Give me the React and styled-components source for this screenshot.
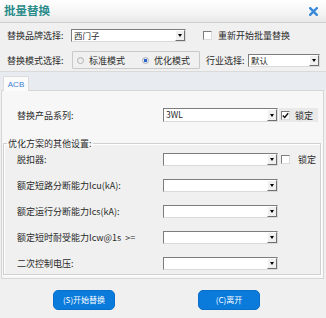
import React from "react";
import styled, { createGlobalStyle } from "styled-components";

const Global = createGlobalStyle`
  html, body { margin: 0; padding: 0; background: #f0f0f0; }
  body { font-family: "Noto Sans CJK SC", "Liberation Sans", sans-serif; font-size: 9px; color: #2a2a2a; }
  * { box-sizing: border-box; }
`;

const Window = styled.div`
  width: 326px;
  height: 318px;
  display: flex;
  flex-direction: column;
  background: #f0f0f0;
  overflow: hidden;
`;

const TitleBar = styled.div`
  height: 23px;
  flex: none;
  display: flex;
  align-items: center;
  justify-content: space-between;
  padding: 0 8px 0 4px;
  background: linear-gradient(#ffffff, #f4f4f4 60%, #e8e8e8);
  border-bottom: 1px solid #cfcfcf;
`;

const Title = styled.span`
  font-size: 11.5px;
  font-weight: 700;
  color: #2b8c8c;
  line-height: 1;
`;

const Close = styled.svg`
  width: 9px;
  height: 9px;
  display: block;
`;

const TopForm = styled.div`
  flex: none;
  display: flex;
  flex-direction: column;
  gap: 9px;
  padding: 6px 0 2px 7px;
`;

const Row = styled.div`
  display: flex;
  align-items: center;
  height: ${(p) => p.$h || 13}px;
`;

const Label = styled.span`
  width: ${(p) => p.$w}px;
  flex: none;
  white-space: pre;
  line-height: 1;
  margin-left: ${(p) => p.$ml || 0}px;
`;

const SelectBox = styled.div`
  width: ${(p) => p.$w}px;
  height: ${(p) => p.$h || 13}px;
  flex: none;
  display: flex;
  align-items: stretch;
  background: #fff;
  border: 1px solid;
  border-color: #7d7d7d #dadada #dadada #7d7d7d;
`;

const SelectValue = styled.span`
  flex: 1;
  padding-left: 2px;
  line-height: 11px;
  font-size: 8.5px;
  white-space: nowrap;
  overflow: hidden;
`;

const DropBtn = styled.span`
  width: 10px;
  flex: none;
  display: flex;
  align-items: center;
  justify-content: center;
  background: #f0f0f0;
  border: 1px solid;
  border-color: #ffffff #6f6f6f #6f6f6f #ffffff;
  &::after {
    content: "";
    border-left: 2.5px solid transparent;
    border-right: 2.5px solid transparent;
    border-top: 3px solid #000;
  }
`;

const CheckWrap = styled.label`
  display: flex;
  align-items: center;
  gap: ${(p) => p.$gap || 6}px;
  margin-left: ${(p) => p.$ml || 0}px;
  height: 14px;
  padding: 0 ${(p) => (p.$bg ? 5 : 0)}px 0 ${(p) => (p.$bg ? 2 : 0)}px;
  background: ${(p) => (p.$bg ? "#e9e9e9" : "transparent")};
  white-space: nowrap;
  line-height: 1;
`;

const Box = styled.span`
  width: 9px;
  height: 9px;
  flex: none;
  background: #fff;
  border: 1px solid;
  border-color: #7d7d7d #dcdcdc #dcdcdc #7d7d7d;
  display: flex;
  align-items: center;
  justify-content: center;
`;

const RadioGroup = styled.div`
  width: 128px;
  height: 18px;
  flex: none;
  display: flex;
  align-items: center;
  gap: 17px;
  padding-left: 4px;
  border: 1px solid #c9c9c9;
  border-radius: 1px;
`;

const RadioItem = styled.span`
  display: flex;
  align-items: center;
  gap: 5px;
  white-space: nowrap;
  line-height: 1;
`;

const RadioDot = styled.span`
  width: 7px;
  height: 7px;
  border-radius: 50%;
  flex: none;
  border: 1px solid #b0b0b0;
  background: ${(p) =>
    p.$on
      ? "radial-gradient(circle, #2c63c8 0 1.6px, #dfe9f7 2px)"
      : "linear-gradient(#e4e4e4, #fafafa)"};
`;

const Tabs = styled.div`
  flex: none;
  display: flex;
  flex-direction: column;
`;

const TabStrip = styled.div`
  height: 19px;
  display: flex;
  align-items: flex-end;
  padding-left: 3px;
  background: #e8ebef;
  border-top: 1px solid #dadada;
`;

const Tab = styled.span`
  width: 26px;
  height: 15px;
  display: flex;
  align-items: center;
  justify-content: center;
  background: #fbfbfb;
  border: 1px solid #dcdcdc;
  border-bottom: none;
  font-family: "Liberation Sans", sans-serif;
  font-size: 8px;
  color: #3b7fd2;
  margin-bottom: -1px;
  position: relative;
`;

const Panel = styled.div`
  height: 189px;
  margin: 0 2px 0 1px;
  display: flex;
  flex-direction: column;
  padding: 17px 0 0 1px;
  background: #f7f7f7;
  border: 1px solid #d6d6d6;
`;

const PanelRow = styled(Row)`
  height: 14px;
  padding-left: 14px;
`;

const Group = styled.fieldset`
  margin: 17px 2px 0 0;
  padding: 5px 0 4px 13px;
  border: 1px solid #d0d0d0;
  box-shadow: inset 1px 1px 0 #fff, 1px 1px 0 #fff;
  background: #f0f0f0;
  display: flex;
  flex-direction: column;
  gap: 13px;
  min-width: 0;
`;

const Legend = styled.legend`
  padding: 0 1px;
  margin-left: -10px;
  line-height: 9px;
  white-space: nowrap;
  background: #f7f7f7;
`;

const Footer = styled.div`
  flex: 1;
  display: flex;
  align-items: flex-start;
  gap: 83px;
  padding: 11px 0 0 53px;
`;

const Button = styled.button`
  width: 62px;
  height: 20px;
  border: 1px solid #0a6fca;
  border-radius: 5px;
  background: #0b7bdb;
  color: #fff;
  font-family: "Noto Sans CJK SC", sans-serif;
  font-size: 8px;
  padding: 0;
  line-height: 1;
`;

const Check = ({ on }) => (
  <Box>
    {on && (
      <svg width="7" height="7" viewBox="0 0 7 7">
        <path d="M0.8 3.4 L2.7 5.4 L6.2 1.2" fill="none" stroke="#111" strokeWidth="1.4" />
      </svg>
    )}
  </Box>
);

const Select = ({ w, value, h }) => (
  <SelectBox $w={w} $h={h}>
    <SelectValue>{value}</SelectValue>
    <DropBtn />
  </SelectBox>
);

const groupRows = [
  { label: "脱扣器:", lock: true },
  { label: "额定短路分断能力Icu(kA):" },
  { label: "额定运行分断能力Ics(kA):" },
  { label: "额定短时耐受能力Icw@1s  >=" },
  { label: "二次控制电压:" },
];

export default function App() {
  return (
    <>
      <Global />
      <Window>
        <TitleBar>
          <Title>批量替换</Title>
          <Close viewBox="0 0 9 9">
            <path d="M1.2 1.2 L7.8 7.8 M7.8 1.2 L1.2 7.8" stroke="#3a8ad8" strokeWidth="2.4" strokeLinecap="square" />
          </Close>
        </TitleBar>
        <TopForm>
          <Row>
            <Label $w={64}>替换品牌选择:</Label>
            <Select w={115} value="西门子" />
            <CheckWrap $ml={17}>
              <Check />
              重新开始批量替换
            </CheckWrap>
          </Row>
          <Row $h={18}>
            <Label $w={65}>替换模式选择:</Label>
            <RadioGroup>
              <RadioItem>
                <RadioDot />
                标准模式
              </RadioItem>
              <RadioItem>
                <RadioDot $on />
                优化模式
              </RadioItem>
            </RadioGroup>
            <Label $w={42} $ml={6}>行业选择:</Label>
            <Select w={72} value="默认" />
          </Row>
        </TopForm>
        <Tabs>
          <TabStrip>
            <Tab>ACB</Tab>
          </TabStrip>
          <Panel>
            <PanelRow>
              <Label $w={146}>替换产品系列:</Label>
              <Select w={115} h={14} value="3WL" />
              <CheckWrap $bg $gap={5} $ml={1}>
                <Check on />
                锁定
              </CheckWrap>
            </PanelRow>
            <Group>
              <Legend>优化方案的其他设置:</Legend>
              {groupRows.map((r) => (
                <Row key={r.label}>
                  <Label $w={146}>{r.label}</Label>
                  <Select w={115} />
                  {r.lock && (
                    <CheckWrap $ml={3} $gap={8}>
                      <Check />
                      锁定
                    </CheckWrap>
                  )}
                </Row>
              ))}
            </Group>
          </Panel>
        </Tabs>
        <Footer>
          <Button>(S)开始替换</Button>
          <Button>(C)离开</Button>
        </Footer>
      </Window>
    </>
  );
}
